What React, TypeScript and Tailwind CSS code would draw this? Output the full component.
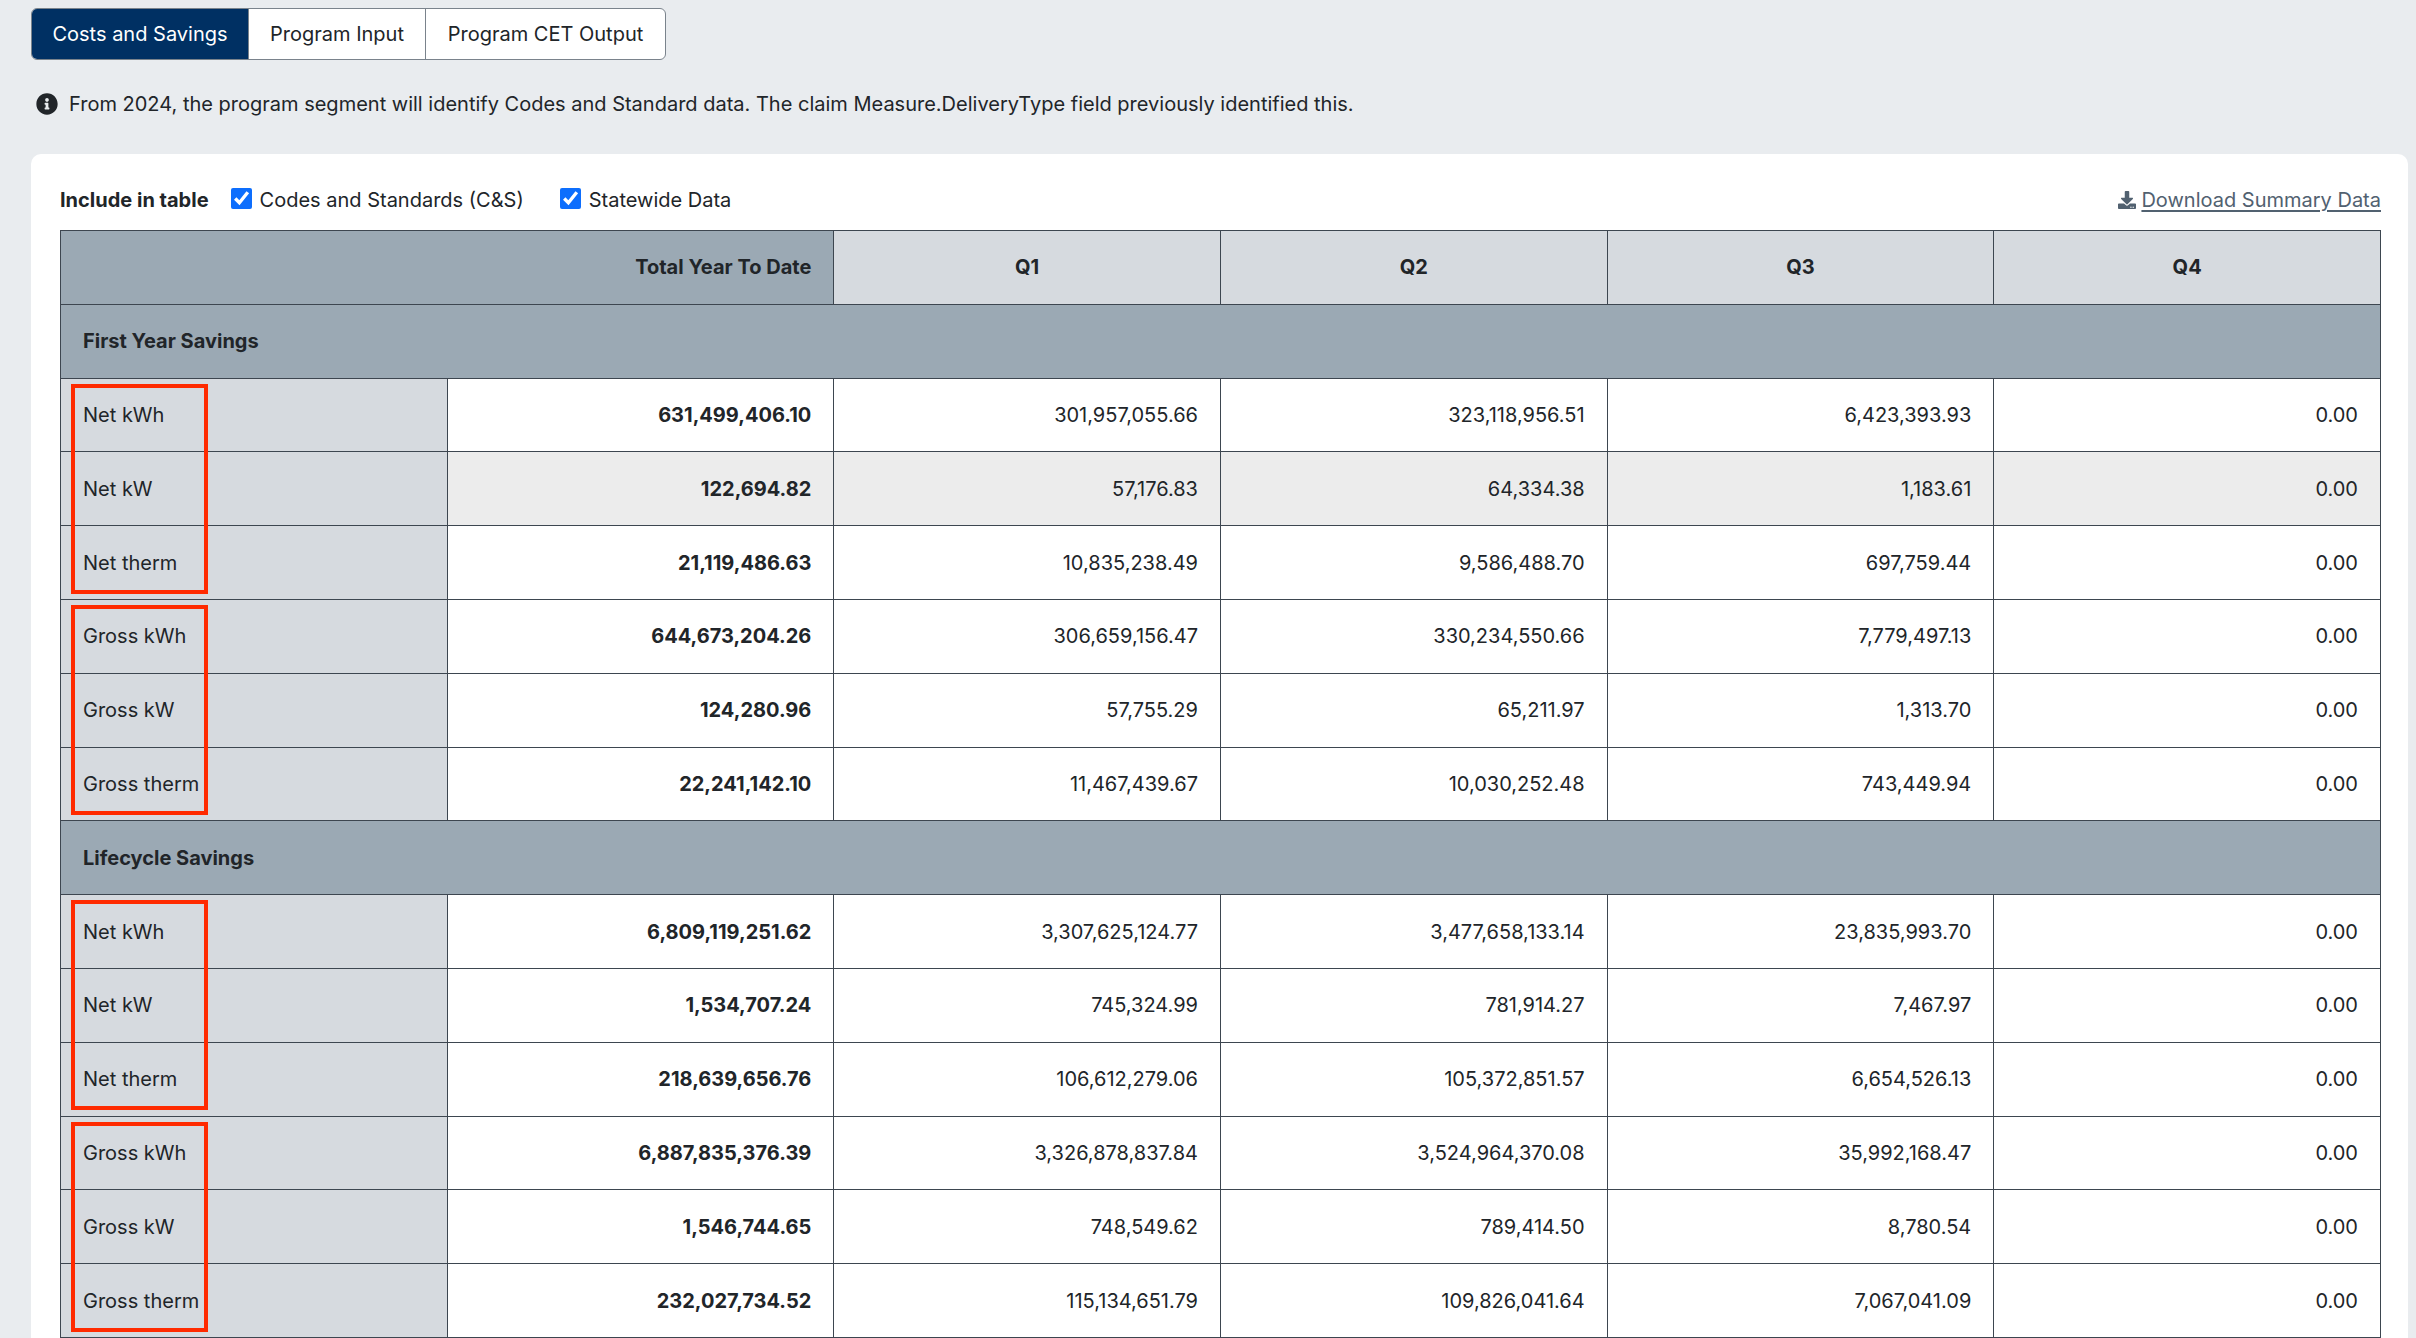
import { FaInfoCircle, FaDownload } from "react-icons/fa";

type Row = { label: string; values: string[]; hover?: boolean };

const firstYear: Row[] = [
  { label: "Net kWh", values: ["631,499,406.10", "301,957,055.66", "323,118,956.51", "6,423,393.93", "0.00"] },
  { label: "Net kW", values: ["122,694.82", "57,176.83", "64,334.38", "1,183.61", "0.00"], hover: true },
  { label: "Net therm", values: ["21,119,486.63", "10,835,238.49", "9,586,488.70", "697,759.44", "0.00"] },
  { label: "Gross kWh", values: ["644,673,204.26", "306,659,156.47", "330,234,550.66", "7,779,497.13", "0.00"] },
  { label: "Gross kW", values: ["124,280.96", "57,755.29", "65,211.97", "1,313.70", "0.00"] },
  { label: "Gross therm", values: ["22,241,142.10", "11,467,439.67", "10,030,252.48", "743,449.94", "0.00"] },
];

const lifecycle: Row[] = [
  { label: "Net kWh", values: ["6,809,119,251.62", "3,307,625,124.77", "3,477,658,133.14", "23,835,993.70", "0.00"] },
  { label: "Net kW", values: ["1,534,707.24", "745,324.99", "781,914.27", "7,467.97", "0.00"] },
  { label: "Net therm", values: ["218,639,656.76", "106,612,279.06", "105,372,851.57", "6,654,526.13", "0.00"] },
  { label: "Gross kWh", values: ["6,887,835,376.39", "3,326,878,837.84", "3,524,964,370.08", "35,992,168.47", "0.00"] },
  { label: "Gross kW", values: ["1,546,744.65", "748,549.62", "789,414.50", "8,780.54", "0.00"] },
  { label: "Gross therm", values: ["232,027,734.52", "115,134,651.79", "109,826,041.64", "7,067,041.09", "0.00"] },
];

const cell = "border border-[#3d4650] px-[22px] align-middle";

function Section({ title, rows }: { title: string; rows: Row[] }) {
  return (
    <>
      <tr className="h-[73.8px]">
        <td colSpan={6} className={`${cell} bg-[#9ba9b4] font-bold text-left`}>
          {title}
        </td>
      </tr>
      {rows.map((row, i) => (
        <tr key={row.label} className={`h-[73.8px] ${row.hover ? "bg-[#ececec]" : "bg-white"}`}>
          <td className={`${cell} bg-[#d6dadf] text-left relative`}>
            {/* annotation box around each group of three labels */}
            {i % 3 === 0 && (
              <div className="absolute z-10 top-[5px] left-[10px] w-[137px] h-[210px] border-4 border-[#ff2a00] pointer-events-none" />
            )}
            {row.label}
          </td>
          {row.values.map((v, j) => (
            <td key={j} className={`${cell} text-right ${j === 0 ? "font-bold" : ""}`}>
              {v}
            </td>
          ))}
        </tr>
      ))}
    </>
  );
}

export default function App() {
  return (
    <main
      className="min-h-screen w-full bg-[#e9ecef] text-[#212529] text-[20px] pt-[8px] pb-[40px]"
      style={{ fontFamily: "Inter, 'Noto Sans', sans-serif" }}
    >
      {/* Tabs */}
      <div className="ml-[31px] flex">
        <div className="flex h-[52px] rounded-[6px] border border-[#7a838c] overflow-hidden bg-white">
          <button className="w-[216px] bg-[#003063] text-white">Costs and Savings</button>
          <button className="w-[177px] border-l border-[#7a838c]">Program Input</button>
          <button className="w-[240px] border-l border-[#7a838c]">Program CET Output</button>
        </div>
      </div>

      {/* Info */}
      <div className="ml-[36px] mt-[29px] h-[30px] flex items-center gap-[11px]">
        <FaInfoCircle className="w-[22px] h-[22px] text-[#212529]" />
        <span>
          From 2024, the program segment will identify Codes and Standard data. The claim Measure.DeliveryType field
          previously identified this.
        </span>
      </div>

      {/* Card */}
      <div className="ml-[31px] mr-[8px] mt-[35px] bg-white rounded-[10px] pl-[29px] pr-[27px] pt-[31px] pb-[40px]">
        <div className="h-[30px] mb-[15px] flex items-center justify-between">
          <div className="flex items-center">
            <span className="font-bold mr-[22px]">Include in table</span>
            <label className="flex items-center gap-[8px] mr-[36px]">
              <input type="checkbox" defaultChecked className="w-[21px] h-[21px] -mt-[4px] accent-[#0d6efd]" />
              Codes and Standards (C&amp;S)
            </label>
            <label className="flex items-center gap-[8px]">
              <input type="checkbox" defaultChecked className="w-[21px] h-[21px] -mt-[4px] accent-[#0d6efd]" />
              Statewide Data
            </label>
          </div>
          <a href="#" className="flex items-center gap-[5px] text-[#516170] underline underline-offset-[3px]">
            <FaDownload className="w-[18px] h-[18px]" />
            Download Summary Data
          </a>
        </div>

        <table className="w-full table-fixed border-collapse">
          <thead>
            <tr className="h-[73.8px]">
              <th colSpan={2} className={`${cell} bg-[#9ba9b4] text-right font-bold`}>
                Total Year To Date
              </th>
              {["Q1", "Q2", "Q3", "Q4"].map((q) => (
                <th key={q} className={`${cell} bg-[#d6dadf] text-center font-bold`}>
                  {q}
                </th>
              ))}
            </tr>
          </thead>
          <tbody>
            <Section title="First Year Savings" rows={firstYear} />
            <Section title="Lifecycle Savings" rows={lifecycle} />
          </tbody>
        </table>
      </div>
    </main>
  );
}
